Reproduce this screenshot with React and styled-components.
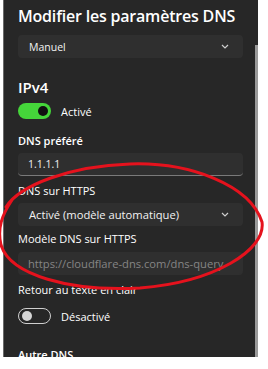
import styled, { createGlobalStyle } from "styled-components";

const GlobalStyle = createGlobalStyle`
  html, body {
    margin: 0;
    padding: 0;
    background: #ffffff;
  }
  body {
    font-family: "Open Sans", "Noto Sans", sans-serif;
  }
`;

function Chevron() {
  return (
    <svg width="8" height="5" viewBox="0 0 8 5">
      <path d="M1 1l3 3 3-3" fill="none" stroke="#cfcfcf" strokeWidth="1.2" />
    </svg>
  );
}

export default function App() {
  return (
    <>
      <GlobalStyle />
      <Frame>
        <Panel>
          <Content>
            <Title>Modifier les paramètres DNS</Title>
            <Select $mt={7}>
              <span>Manuel</span>
              <Chevron />
            </Select>

            <Heading>IPv4</Heading>
            <ToggleRow $mt={5}>
              <Toggle $on>
                <Knob $on />
              </Toggle>
              <span>Activé</span>
            </ToggleRow>

            <Label $bold $mt={14}>DNS préféré</Label>
            <Field $mt={4}>1.1.1.1</Field>

            <Label $mt={7}>DNS sur HTTPS</Label>
            <Select $mt={4} $big>
              <span>Activé (modèle automatique)</span>
              <Chevron />
            </Select>

            <Label $mt={5}>Modèle DNS sur HTTPS</Label>
            <Field $mt={5} $muted $big>
              https://cloudflare-dns.com/dns-query
            </Field>

            <Label $mt={7}>Retour au texte en clair</Label>
            <ToggleRow $mt={10}>
              <Toggle>
                <Knob />
              </Toggle>
              <span>Désactivé</span>
            </ToggleRow>

            <Label $bold $mt={23}>Autre DNS</Label>
          </Content>
          <ScrollTrack>
            <ScrollBar />
          </ScrollTrack>
        </Panel>
      </Frame>
      <Scribble viewBox="0 0 268 369" width="268" height="369">
        <path
          d="M6 207 C 20 185, 70 166, 130 164 C 190 162, 250 185, 262 222 C 266 250, 215 282, 140 288 C 70 292, 10 275, 1 245 C -3 228, 2 215, 12 200"
          fill="none"
          stroke="#e5121d"
          strokeWidth="3"
          strokeLinecap="round"
        />
      </Scribble>
    </>
  );
}

const Frame = styled.div`
  width: 268px;
  height: 369px;
  padding-left: 3px;
  box-sizing: border-box;
  background: #ffffff;
`;

const Panel = styled.div`
  display: flex;
  width: 255px;
  height: 357px;
  overflow: hidden;
  background: #272727;
  border-left: 1px solid #6a6a6a;
  box-sizing: border-box;
`;

const Content = styled.div`
  flex: 1;
  padding: 4px 12px 0 14px;
  color: #ffffff;
`;

const ScrollTrack = styled.div`
  width: 3px;
  padding-top: 45px;
  background: #272727;
`;

const ScrollBar = styled.div`
  height: 100%;
  background: #9a9a9a;
`;

const Title = styled.div`
  font-size: 16px;
  font-weight: 600;
  line-height: 24px;
  white-space: nowrap;
  letter-spacing: -0.2px;
`;

const Heading = styled.div`
  margin-top: 18px;
  font-size: 15px;
  font-weight: 600;
  line-height: 22px;
`;

const Select = styled.div`
  margin-top: ${(p) => p.$mt}px;
  height: 23px;
  display: flex;
  align-items: center;
  justify-content: space-between;
  padding: 0 14px 0 11px;
  border-radius: 4px;
  background: #2f2f2f;
  font-size: ${(p) => (p.$big ? 11.2 : 10.5)}px;
  color: #f2f2f2;
`;

const Field = styled.div`
  margin-top: ${(p) => p.$mt}px;
  height: 23px;
  display: flex;
  align-items: center;
  padding-left: 10px;
  border-radius: 4px;
  background: #2f2f2f;
  border-bottom: 1px solid ${(p) => (p.$muted ? "#2f2f2f" : "#7a7a7a")};
  box-sizing: border-box;
  font-size: ${(p) => (p.$big ? 11.2 : 10.5)}px;
  color: ${(p) => (p.$muted ? "#858585" : "#f2f2f2")};
  white-space: nowrap;
  overflow: hidden;
`;

const Label = styled.div`
  margin-top: ${(p) => p.$mt}px;
  font-size: 11px;
  line-height: 16px;
  font-weight: ${(p) => (p.$bold ? 600 : 400)};
  white-space: nowrap;
`;

const ToggleRow = styled.div`
  margin-top: ${(p) => p.$mt}px;
  display: flex;
  align-items: center;
  gap: 10px;
  font-size: 11px;
`;

const Toggle = styled.div`
  width: 33px;
  height: 16px;
  border-radius: 8px;
  box-sizing: border-box;
  display: flex;
  align-items: center;
  justify-content: ${(p) => (p.$on ? "flex-end" : "flex-start")};
  padding: 0 3px;
  background: ${(p) => (p.$on ? "#45d63a" : "transparent")};
  border: ${(p) => (p.$on ? "none" : "1px solid #cfcfcf")};
`;

const Knob = styled.div`
  width: 10px;
  height: 10px;
  border-radius: 50%;
  background: ${(p) => (p.$on ? "#111111" : "#d6d6d6")};
`;

const Scribble = styled.svg`
  position: absolute;
  left: 0;
  top: 0;
  pointer-events: none;
`;
